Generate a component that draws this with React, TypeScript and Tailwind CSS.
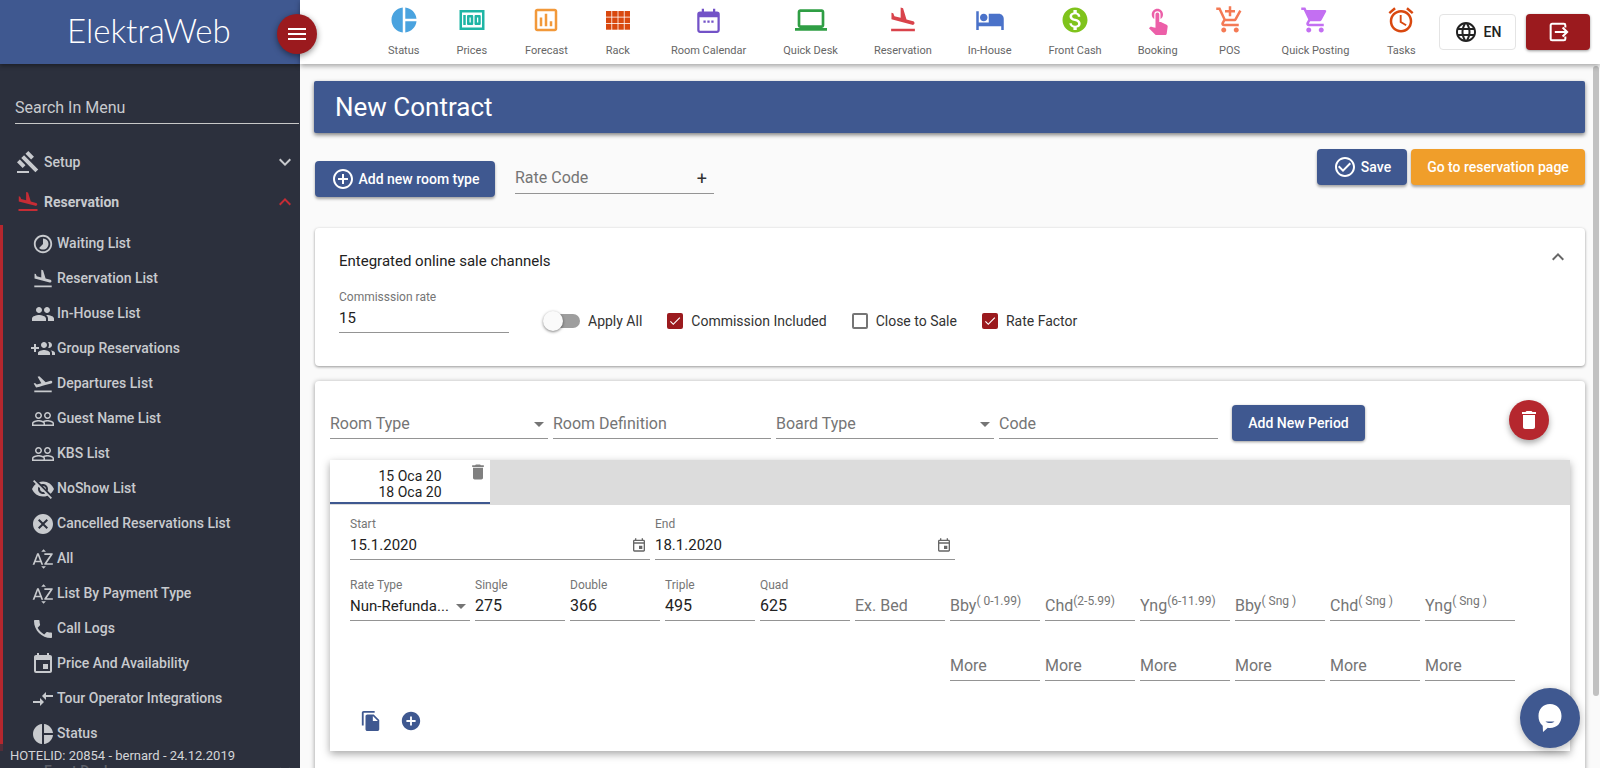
import React from 'react';
import {
  MdGavel,
  MdFlightLand,
  MdFlightTakeoff,
  MdPeople,
  MdPeopleOutline,
  MdVisibilityOff,
  MdCancel,
  MdSortByAlpha,
  MdPhone,
  MdEvent,
  MdCompareArrows,
  MdPieChart,
  MdTimelapse,
  MdKeyboardArrowDown,
  MdKeyboardArrowUp,
  MdMenu,
  MdMoney,
  MdOutlineAssessment,
  MdLaptop,
  MdHotel,
  MdMonetizationOn,
  MdTouchApp,
  MdAddShoppingCart,
  MdShoppingCart,
  MdAccessAlarm,
  MdLanguage,
  MdDelete,
  MdFileCopy,
  MdAddCircle,
  MdAddCircleOutline,
  MdCheckCircleOutline,
  MdArrowDropDown,
  MdCheck,
  MdOutlineEvent,
} from 'react-icons/md';

const CalendarIcon = ({ size = 28, className = '' }: { size?: number; className?: string }) => (
  <svg width={size} height={size} viewBox="0 0 24 24" className={className} fill="currentColor">
    <path d="M6 1.500h2V4h8V1.500h2V4h1.500A2.500 2.500 0 0 1 22 6.500v14a2.500 2.500 0 0 1-2.500 2.500h-15A2.500 2.500 0 0 1 2 20.500v-14A2.500 2.500 0 0 1 4.500 4H6zM4 9v11.500c0 .3.200.5.500.5h15c.3 0 .5-.2.5-.5V9z" />
    <rect x="7.500" y="12" width="2" height="2" />
    <rect x="11" y="12" width="2" height="2" />
    <rect x="14.500" y="12" width="2" height="2" />
  </svg>
);

const RackIcon = ({ className = '' }: { className?: string }) => (
  <svg width={24} height={19} viewBox="0 0 24 19" className={className} fill="currentColor">
    {[0, 6.500, 13].map((y) =>
      [0, 6.200, 12.400, 18.600].map((x) => <rect key={`${x}-${y}`} x={x} y={y} width="5.400" height="5.700" />),
    )}
  </svg>
);

const GroupAddIcon = () => (
  <svg width={24} height={24} viewBox="0 0 24 24" fill="currentColor">
    <path d="M8 10H5V7H3v3H0v2h3v3h2v-3h3v-2zm10 1c1.660 0 2.990-1.340 2.990-3S19.660 5 18 5c-.32 0-.63.05-.91.14.57.81.9 1.790.9 2.860s-.34 2.040-.9 2.860c.28.09.59.14.91.14zm-5 0c1.660 0 2.990-1.340 2.990-3S14.660 5 13 5s-3 1.340-3 3 1.340 3 3 3zm6.620 2.160c.83.73 1.380 1.660 1.380 2.840v2h3v-2c0-1.540-2.370-2.490-4.380-2.840zM13 13c-2 0-6 1-6 3v2h12v-2c0-2-4-3-6-3z" />
  </svg>
);

const LogoutIcon = () => (
  <svg width={22} height={22} viewBox="0 0 24 24" fill="none" stroke="white" strokeWidth="2.200">
    <path d="M20 7V4.500A1.500 1.500 0 0 0 18.500 3h-13A1.500 1.500 0 0 0 4 4.500v15A1.500 1.500 0 0 0 5.500 21h13a1.500 1.500 0 0 0 1.500-1.500V17" />
    <path d="M8.500 12H22M17 7l5 5-5 5" />
  </svg>
);

const ChatIcon = () => (
  <svg width={36} height={36} viewBox="0 0 36 36">
    <path
      d="M18 4c7.200 0 11.500 5 11.500 12S25 28 18 28c-.8 0-1.500 0-2.200-.2L11 32l-.3-6.200C7.800 23.500 6.500 20 6.500 16 6.500 9 10.800 4 18 4z"
      fill="white"
    />
    <path d="M13.500 21.500c2.500 2 6.500 2 9 0z" fill="#3f5890" />
  </svg>
);

const toolbar = [
  { label: 'Status', icon: <MdPieChart size={30} className="text-[#4aa3df]" />, extra: '' },
  { label: 'Prices', icon: <MdMoney size={30} className="text-[#1fb5a5]" />, extra: '' },
  { label: 'Forecast', icon: <MdOutlineAssessment size={30} className="text-[#f2993a]" />, extra: 'ml-px' },
  { label: 'Rack', icon: <RackIcon className="text-[#d9480f]" />, extra: 'ml-px mr-[4px]' },
  { label: 'Room Calendar', icon: <CalendarIcon size={27} className="text-[#7352c7]" />, extra: '' },
  { label: 'Quick Desk', icon: <MdLaptop size={32} className="text-[#2f9e44]" />, extra: '' },
  { label: 'Reservation', icon: <MdFlightLand size={30} className="text-[#d9434b]" />, extra: '-ml-px' },
  { label: 'In-House', icon: <MdHotel size={30} className="text-[#4a72c9]" />, extra: '-ml-px' },
  { label: 'Front Cash', icon: <MdMonetizationOn size={30} className="text-[#7fc31c]" />, extra: '' },
  { label: 'Booking', icon: <MdTouchApp size={30} className="text-[#ec5fa8]" />, extra: '-ml-px' },
  { label: 'POS', icon: <MdAddShoppingCart size={30} className="text-[#f47a55]" />, extra: '' },
  { label: 'Quick Posting', icon: <MdShoppingCart size={30} className="text-[#c36ff2]" />, extra: '' },
  { label: 'Tasks', icon: <MdAccessAlarm size={30} className="text-[#d9480f]" />, extra: '' },
];

const reservationItems = [
  { label: 'Waiting List', icon: <MdTimelapse size={22} /> },
  { label: 'Reservation List', icon: <MdFlightLand size={22} /> },
  { label: 'In-House List', icon: <MdPeople size={24} /> },
  { label: 'Group Reservations', icon: <GroupAddIcon /> },
  { label: 'Departures List', icon: <MdFlightTakeoff size={22} /> },
  { label: 'Guest Name List', icon: <MdPeopleOutline size={24} /> },
  { label: 'KBS List', icon: <MdPeopleOutline size={24} /> },
  { label: 'NoShow List', icon: <MdVisibilityOff size={24} /> },
  { label: 'Cancelled Reservations List', icon: <MdCancel size={24} /> },
  { label: 'All', icon: <MdSortByAlpha size={24} /> },
  { label: 'List By Payment Type', icon: <MdSortByAlpha size={24} /> },
  { label: 'Call Logs', icon: <MdPhone size={24} /> },
  { label: 'Price And Availability', icon: <MdEvent size={24} /> },
  { label: 'Tour Operator Integrations', icon: <MdCompareArrows size={24} /> },
  { label: 'Status', icon: <MdPieChart size={24} /> },
];

const Sidebar = () => (
  <aside className="relative w-[300px] h-full shrink-0 bg-[#2c303d] text-[#c8cace] overflow-hidden">
    <div className="h-[64px] bg-[#3f5890] flex items-center pl-[67px] pb-[4px] shadow-[0_2px_4px_rgba(0,0,0,0.35)] relative">
      <span className="text-[33px] leading-none font-[Lato,sans-serif] font-light text-white">ElektraWeb</span>
    </div>
    <div className="ml-[15px] mr-px mt-[32px] h-[28px] border-b border-[#c8c8c8] text-[16px] leading-[24px]">
      Search In Menu
    </div>
    <div className="h-[40px] mt-[18px] flex items-center pl-[16px] pr-[3px] text-[14px] font-medium">
      <MdGavel size={24} className="w-[24px]" />
      <span className="ml-[4px] flex-1">Setup</span>
      <MdKeyboardArrowDown size={24} />
    </div>
    <div className="h-[40px] flex items-center pl-[16px] pr-[3px] text-[14px] font-medium">
      <MdFlightLand size={24} className="text-[#c62c35]" />
      <span className="ml-[4px] flex-1 font-bold">Reservation</span>
      <MdKeyboardArrowUp size={24} className="text-[#c62c35]" />
    </div>
    <div className="mt-[3px] border-l-[3px] border-[#b5272e] pt-px">
      {reservationItems.map((item) => (
        <div key={item.label} className="h-[35px] flex items-center text-[14px] font-medium">
          <span className="w-[54px] pl-[25px] flex justify-center shrink-0">{item.icon}</span>
          <span>{item.label}</span>
        </div>
      ))}
    </div>
    <div className="h-[40px] flex items-center pl-[16px] pr-[3px] text-[14px] font-medium">
      <span className="flex-1 pl-[28px]">Front Desk</span>
      <MdKeyboardArrowDown size={24} />
    </div>
    <div className="absolute left-0 right-0 bottom-0 h-[24px] pl-[10px] bg-[#2c303d]/70 text-[13px] leading-[24px] text-[#d4d5d8]">
      HOTELID: 20854 - bernard - 24.12.2019
    </div>
  </aside>
);

const Topbar = () => (
  <header className="relative z-10 h-[64px] shrink-0 bg-white shadow-[0_2px_5px_rgba(0,0,0,0.35)] flex items-start pl-[88px]">
    <div className="flex gap-[37px] pt-[3px]">
      {toolbar.map((item) => (
        <div key={item.label} className={`flex flex-col items-center ${item.extra}`}>
          <div className="h-[34px] flex items-center justify-center">{item.icon}</div>
          <span className="mt-[5px] text-[11px] leading-[18px] text-[#666] whitespace-nowrap">{item.label}</span>
        </div>
      ))}
    </div>
    <div className="ml-auto mr-[10px] mt-[14px] flex gap-[10px]">
      <div className="w-[77px] h-[36px] bg-white border border-[#e4e4e4] rounded-[4px] flex items-center justify-center gap-[6px] text-[14px] font-medium text-[#222]">
        <MdLanguage size={24} />
        EN
      </div>
      <div className="w-[64px] h-[36px] bg-[#9b1a1e] rounded-[4px] shadow-[0_1px_3px_rgba(0,0,0,0.4)] flex items-center justify-center">
        <LogoutIcon />
      </div>
    </div>
  </header>
);

const Checkbox = ({ checked, label }: { checked?: boolean; label: string }) => (
  <div className="flex items-center gap-[8px]">
    {checked ? (
      <span className="w-[16px] h-[16px] rounded-[2px] bg-[#9b1a1e] flex items-center justify-center text-white">
        <MdCheck size={14} />
      </span>
    ) : (
      <span className="w-[16px] h-[16px] rounded-[2px] border-2 border-[#757575]" />
    )}
    <span className="text-[14px] text-[#333]">{label}</span>
  </div>
);

const Field = ({
  label,
  value,
  placeholder,
  sup,
  className = '',
  valueClass = 'text-[16px]',
  trailing,
}: {
  label?: string;
  value?: string;
  placeholder?: string;
  sup?: string;
  className?: string;
  valueClass?: string;
  trailing?: React.ReactNode;
}) => (
  <div className={`flex flex-col shrink-0 ${className}`}>
    {label && <div className="h-[14px] mb-[2px] text-[12px] leading-[14px] text-[#757575]">{label}</div>}
    <div className="h-[27px] pb-[2px] border-b border-[#949494] flex items-center justify-between text-[16px] leading-[24px] whitespace-nowrap">
      {value ? (
        <span className={`text-[#222] ${valueClass}`}>{value}</span>
      ) : (
        <span className="text-[#757575]">
          {placeholder}
          {sup && <sup className="text-[12px]">{sup}</sup>}
        </span>
      )}
      {trailing}
    </div>
  </div>
);

const extraFields = [
  { placeholder: 'Bby', sup: '( 0-1.99)' },
  { placeholder: 'Chd', sup: '(2-5.99)' },
  { placeholder: 'Yng', sup: '(6-11.99)' },
  { placeholder: 'Bby', sup: '( Sng )' },
  { placeholder: 'Chd', sup: '( Sng )' },
  { placeholder: 'Yng', sup: '( Sng )' },
];

const PeriodPanel = () => (
  <div className="mx-[15px] mt-[19px] bg-white shadow-[0_3px_8px_rgba(0,0,0,0.35)]">
    <div className="h-[45px] bg-[#dcdcdc] flex">
      <div className="relative w-[160px] h-[44px] bg-white border-b-2 border-[#3f5890] flex flex-col items-center justify-center pt-[6px] text-[14px] leading-[16px] text-[#222]">
        <span>15 Oca 20</span>
        <span>18 Oca 20</span>
        <MdDelete size={20} className="absolute right-[2px] top-[2px] text-[#808080]" />
      </div>
    </div>
    <div className="pt-[12px] pl-[20px] pb-[19px]">
      <div className="flex gap-[5px]">
        <Field
          label="Start"
          value="15.1.2020"
          valueClass="text-[15px]"
          className="w-[300px]"
          trailing={<MdOutlineEvent size={16} className="shrink-0 text-[#666] mr-[3px]" />}
        />
        <Field
          label="End"
          value="18.1.2020"
          valueClass="text-[15px]"
          className="w-[300px]"
          trailing={<MdOutlineEvent size={16} className="shrink-0 text-[#666] mr-[3px]" />}
        />
      </div>
      <div className="flex items-end gap-[5px] mt-[18px]">
        <Field
          label="Rate Type"
          value="Nun-Refunda..."
          valueClass="text-[15px]"
          className="w-[120px]"
          trailing={<MdArrowDropDown size={24} className="shrink-0 text-[#757575] -mr-[3px]" />}
        />
        <Field label="Single" value="275" className="w-[90px]" />
        <Field label="Double" value="366" className="w-[90px]" />
        <Field label="Triple" value="495" className="w-[90px]" />
        <Field label="Quad" value="625" className="w-[90px]" />
        <Field placeholder="Ex. Bed" className="w-[90px]" />
        {extraFields.map((f, i) => (
          <Field key={i} placeholder={f.placeholder} sup={f.sup} className="w-[90px]" />
        ))}
      </div>
      <div className="flex gap-[5px] mt-[33px] ml-[600px]">
        {extraFields.map((_, i) => (
          <Field key={i} placeholder="More" className="w-[90px]" />
        ))}
      </div>
      <div className="flex items-center gap-[18px] mt-[29px] pl-[10px] text-[#3f5890]">
        <MdFileCopy size={22} />
        <MdAddCircle size={22} />
      </div>
    </div>
  </div>
);

const Content = () => (
  <div className="flex-1 min-w-0 pl-[15px] pt-[17px]">
    <div className="-ml-px h-[52px] bg-[#3f5890] rounded-[2px] shadow-[0_2px_4px_rgba(0,0,0,0.5)] flex items-center pl-[21px] text-[26px] text-white">
      New Contract
    </div>

    <div className="flex justify-between mt-[16px]">
      <div className="flex items-start gap-[20px] pt-[12px]">
        <button className="w-[180px] h-[36px] bg-[#3f5890] rounded-[4px] shadow-[0_2px_3px_rgba(0,0,0,0.35)] flex items-center justify-center gap-[4px] text-[14px] font-medium text-white">
          <MdAddCircleOutline size={24} />
          Add new room type
        </button>
        <div className="w-[199px] h-[33px] pt-[2px] border-b border-[#949494] flex items-center justify-between pr-[7px] text-[16px] text-[#757575]">
          <span>Rate Code</span>
          <span className="text-[#333] text-[18px]">+</span>
        </div>
      </div>
      <div className="flex gap-[4px]">
        <button className="w-[90px] h-[36px] bg-[#3f5890] rounded-[4px] shadow-[0_2px_3px_rgba(0,0,0,0.35)] flex items-center justify-center gap-[4px] text-[14px] font-medium text-white">
          <MdCheckCircleOutline size={24} />
          Save
        </button>
        <button className="w-[174px] h-[36px] bg-[#f09e2a] rounded-[4px] shadow-[0_2px_3px_rgba(0,0,0,0.35)] text-[14px] font-medium text-white">
          Go to reservation page
        </button>
      </div>
    </div>

    <section className="relative h-[138px] mt-[31px] bg-white rounded-[4px] shadow-[0_1px_3px_rgba(0,0,0,0.4)] pl-[24px] pt-[23px]">
      <div className="text-[15px] leading-[20px] text-[#222]">Entegrated online sale channels</div>
      <MdKeyboardArrowUp size={24} className="absolute right-[15px] top-[17px] text-[#666]" />
      <div className="flex items-end mt-[19px]">
        <Field label="Commisssion rate" value="15" valueClass="text-[15px]" className="w-[170px]" />
        <div className="flex items-center h-[24px] ml-[35px]">
          <div className="relative w-[36px] h-[14px] rounded-full bg-[#9e9e9e] mr-[8px]">
            <span className="absolute -left-px -top-[3px] w-[20px] h-[20px] rounded-full bg-[#fafafa] shadow-[0_1px_3px_rgba(0,0,0,0.5)]" />
          </div>
          <span className="text-[14px] text-[#333] mr-[25px]">Apply All</span>
          <div className="flex gap-[25px]">
            <Checkbox checked label="Commission Included" />
            <Checkbox label="Close to Sale" />
            <Checkbox checked label="Rate Factor" />
          </div>
        </div>
      </div>
    </section>

    <section className="mt-[15px] bg-white rounded-[4px] shadow-[0_1px_5px_rgba(0,0,0,0.4)] pt-[19px] pb-[30px]">
      <div className="flex items-end pl-[15px] h-[41px]">
        <div className="flex gap-[5px] mb-[2px]">
          <Field
            placeholder="Room Type"
            className="w-[218px]"
            trailing={<MdArrowDropDown size={24} className="text-[#757575] -mr-[3px]" />}
          />
          <Field placeholder="Room Definition" className="w-[218px]" />
          <Field
            placeholder="Board Type"
            className="w-[218px]"
            trailing={<MdArrowDropDown size={24} className="text-[#757575] -mr-[3px]" />}
          />
          <Field placeholder="Code" className="w-[219px]" />
        </div>
        <button className="ml-[14px] w-[133px] h-[36px] bg-[#3f5890] rounded-[4px] shadow-[0_1px_3px_rgba(0,0,0,0.4)] text-[14px] font-medium text-white">
          Add New Period
        </button>
        <div className="ml-[144px] self-start w-[40px] h-[40px] rounded-full bg-[#b5272e] shadow-[0_3px_6px_rgba(0,0,0,0.35)] flex items-center justify-center text-white">
          <MdDelete size={24} />
        </div>
      </div>
      <PeriodPanel />
    </section>
  </div>
);

export default function App() {
  return (
    <div className="relative flex h-screen w-full overflow-hidden bg-[#fafafa] font-[Roboto,sans-serif]">
      <Sidebar />
      <button className="absolute z-20 left-[277px] top-[14px] w-[40px] h-[40px] rounded-full bg-[#9b1a1e] shadow-[0_2px_6px_rgba(0,0,0,0.45)] flex items-center justify-center text-white">
        <MdMenu size={24} />
      </button>
      <main className="flex-1 min-w-0 flex flex-col">
        <Topbar />
        <div className="flex flex-1 min-h-0 overflow-hidden">
          <Content />
          <div className="w-[15px] shrink-0 pl-[8px] pt-[2px]">
            <div className="w-[6px] h-[630px] rounded-full bg-[#c1c1c1]" />
          </div>
        </div>
      </main>
      <div className="absolute z-20 right-[20px] bottom-[20px] w-[60px] h-[60px] rounded-full bg-[#3f5890] shadow-[0_2px_8px_rgba(0,0,0,0.3)] flex items-center justify-center">
        <ChatIcon />
      </div>
    </div>
  );
}
